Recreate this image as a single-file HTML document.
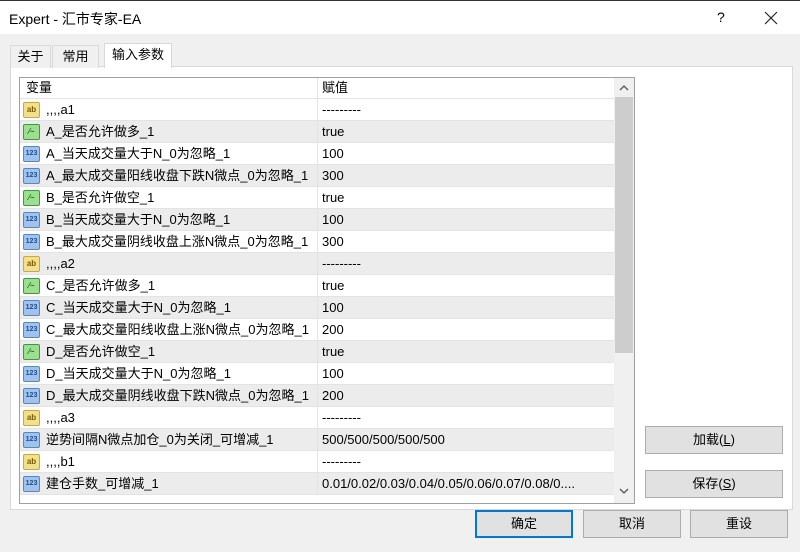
<!DOCTYPE html><html><head><meta charset="utf-8"><style>
*{box-sizing:border-box;margin:0;padding:0}
body{width:800px;height:552px;overflow:hidden;background:#f0f0f0;font-family:"Liberation Sans","Noto Sans CJK SC",sans-serif;font-size:13px;line-height:16px;color:#000;position:relative}
.title{position:absolute;left:0;top:0;width:800px;height:34px;background:#fff;border-top:1px solid #333}
.title .t{position:absolute;left:9px;top:9px;font-size:14px;line-height:18px}
.abs{position:absolute}
.tab{position:absolute;top:44px;height:23px;border:1px solid #d9d9d9;border-bottom:none;background:#f0f0f0;font-size:13px;line-height:16px;padding-top:3px;text-align:center}
.panel{position:absolute;left:10px;top:66px;width:783px;height:444px;background:#fff;border:1px solid #d9d9d9}
.list{position:absolute;left:19px;top:77px;width:616px;height:427px;border:1px solid #a0a0a0;background:#fff;overflow:hidden}
.row{position:absolute;left:0;width:594px;height:22px;border-bottom:1px solid #e3e3e3}
.row.g{background:#ececec}
.row .n{position:absolute;left:26px;top:3px;white-space:nowrap;display:block;height:16px;line-height:16px}
.row .v{position:absolute;left:302px;top:3px;white-space:nowrap;display:block;height:16px;line-height:16px}
.row .d{position:absolute;left:297px;top:0;width:1px;height:22px;background:#e3e3e3}
.ic{position:absolute;left:3px;top:3px;width:17px;height:16px;border-radius:2px;font-size:8px;font-weight:bold;text-align:center;line-height:14px}
.ab{background:#f3e08a;border:1px solid #c9a93a;color:#7a5a00}
.bo{background:#9be08f;border:1px solid #3f9a3f;color:#1c6e1c}
.nu{background:#9ec3ee;border:1px solid #5388c6;color:#234e8a;font-size:7px}
.sb{position:absolute;left:594px;top:0;width:20px;height:425px;background:#f0f0f0}
.btn{position:absolute;height:28px;background:#e1e1e1;border:1px solid #adadad;text-align:center;line-height:26px;font-size:13px}
</style></head><body>
<div class="title"><span class="t">Expert - 汇市专家-EA</span>
<span class="abs" style="left:717px;top:8px;font-size:14px">?</span>
<svg class="abs" style="left:764px;top:10px" width="14" height="14"><path d="M1 1L13 13M13 1L1 13" stroke="#222" stroke-width="1.2"/></svg></div>
<div class="panel"></div>
<div class="tab" style="left:10px;width:41px;top:45px">关于</div>
<div class="tab" style="left:52px;width:47px;top:45px">常用</div>
<div class="tab" style="left:104px;width:68px;top:43px;height:25px;background:#fff;z-index:2">输入参数</div>
<div class="list">
<div class="row" style="top:0;height:21px"><span class="n" style="left:6px;top:2px">变量</span><span class="v" style="top:2px">赋值</span><div class="d"></div></div>
<div id="rows"></div>
<div class="sb">
<svg class="abs" style="left:5px;top:6px" width="10" height="7"><path d="M1 6L5 2L9 6" stroke="#555" fill="none" stroke-width="1.3"/></svg>
<div class="abs" style="left:1px;top:19px;width:18px;height:256px;background:#cdcdcd"></div>
<svg class="abs" style="left:5px;top:410px" width="10" height="7"><path d="M1 1L5 5L9 1" stroke="#555" fill="none" stroke-width="1.3"/></svg>
</div>
</div>
<div class="btn" style="left:645px;top:426px;width:138px">加载(<u>L</u>)</div>
<div class="btn" style="left:645px;top:470px;width:138px">保存(<u>S</u>)</div>
<div class="btn" style="left:475px;top:510px;width:98px;border:2px solid #0078d7;line-height:24px">确定</div>
<div class="btn" style="left:583px;top:510px;width:98px">取消</div>
<div class="btn" style="left:690px;top:510px;width:98px">重设</div>
<script>
var d=[["ab",",,,,a1","---------"],["bo","A_是否允许做多_1","true"],["nu","A_当天成交量大于N_0为忽略_1","100"],["nu","A_最大成交量阳线收盘下跌N微点_0为忽略_1","300"],["bo","B_是否允许做空_1","true"],["nu","B_当天成交量大于N_0为忽略_1","100"],["nu","B_最大成交量阴线收盘上涨N微点_0为忽略_1","300"],["ab",",,,,a2","---------"],["bo","C_是否允许做多_1","true"],["nu","C_当天成交量大于N_0为忽略_1","100"],["nu","C_最大成交量阳线收盘上涨N微点_0为忽略_1","200"],["bo","D_是否允许做空_1","true"],["nu","D_当天成交量大于N_0为忽略_1","100"],["nu","D_最大成交量阴线收盘下跌N微点_0为忽略_1","200"],["ab",",,,,a3","---------"],["nu","逆势间隔N微点加仓_0为关闭_可增减_1","500/500/500/500/500"],["ab",",,,,b1","---------"],["nu","建仓手数_可增减_1","0.01/0.02/0.03/0.04/0.05/0.06/0.07/0.08/0...."]];
var h="";d.forEach(function(r,i){var t={ab:"ab",bo:"⁄~",nu:"123"}[r[0]];h+='<div class="row'+(i%2?' g':'')+'" style="top:'+(21+i*22)+'px"><div class="ic '+r[0]+'">'+t+'</div><span class="n">'+r[1]+'</span><div class="d"></div><span class="v">'+r[2]+'</span></div>';});
document.getElementById("rows").innerHTML=h;
</script>
</body></html>
